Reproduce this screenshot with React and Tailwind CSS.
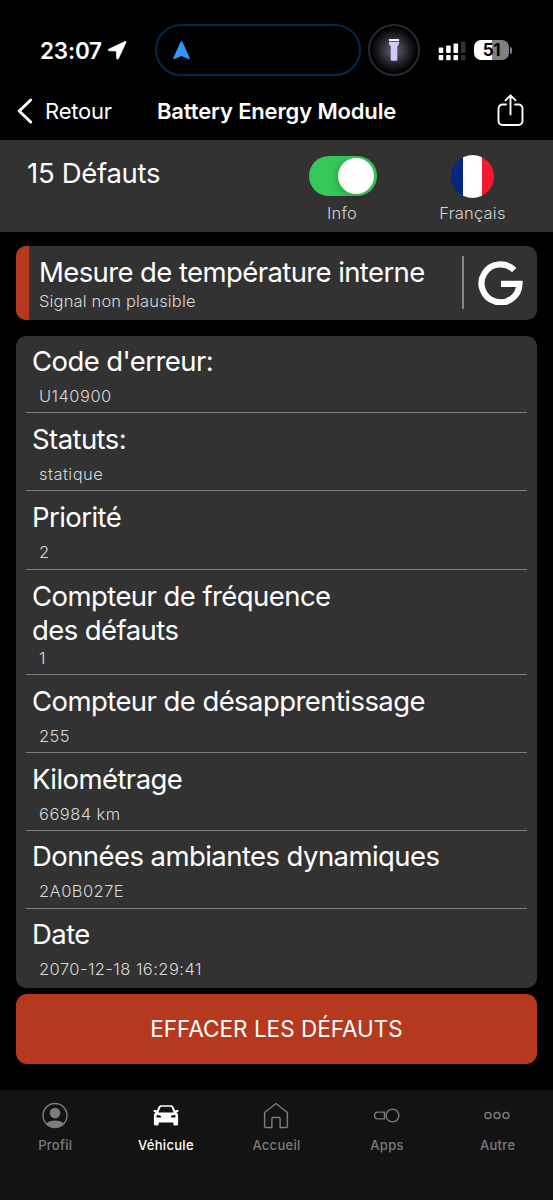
const rows = [
    { title: "Code d'erreur:", value: "U140900", height: "h-[77px] pt-[8px]" },
    { title: "Statuts:", value: "statique", height: "h-[78px] pt-[9px]" },
    { title: "Priorité", value: "2", height: "h-[79px] pt-[9px]" },
    { title: "Compteur de fréquence des défauts", value: "1", height: "h-[105px] pt-[9px]", wrap: true },
    { title: "Compteur de désapprentissage", value: "255", height: "h-[78px] pt-[9px]" },
    { title: "Kilométrage", value: "66984 km", height: "h-[78px] pt-[9px]" },
    { title: "Données ambiantes dynamiques", value: "2A0B027E", height: "h-[78px] pt-[8px]" },
    { title: "Date", value: "2070-12-18 16:29:41", height: "h-[79px] pt-[8px]" },
];

function StatusBar() {
    return (
        <div className="flex h-[52px] items-center">
            <span className="mt-[2px] ml-10 w-[64px] text-[22.5px] font-semibold tracking-[-0.2px]">23:07</span>
            <svg className="ml-[3px]" width="20" height="20" viewBox="0 0 20 20" fill="#fff" stroke="#fff" strokeWidth="0.8" strokeLinejoin="round">
                <path d="M18 1.600 1.800 9.200c-.9.500-.6 1.500.4 1.600l7.300.2.200 7.300c.1 1 1.200 1.200 1.700.3L18.900 2.600c.3-.8-.3-1.300-.9-1Z" />
            </svg>

            {/* Dynamic island */}
            <div className="ml-[28px] flex h-[52px] w-[206px] items-center rounded-full border-2 border-[#062747] pl-[16px]">
                <svg width="17" height="19" viewBox="0 0 17 19" fill="#3296ff">
                    <path d="M7.600.8c.3-.8 1.500-.8 1.800 0L16.600 16.800c.5 1.100-.3 1.700-1.200 1.200L8.500 15 1.600 18C.7 18.500-.1 17.900.4 16.800Z" />
                </svg>
            </div>
            <div className="ml-[7px] flex size-[52px] items-center justify-center rounded-full border-2 border-[#2a2733] bg-[radial-gradient(circle,#5f5b70_0%,#46424f_22%,#1c1b22_46%,#000_68%)]">
                <svg width="12" height="24" viewBox="0 0 12 24">
                    <path d="M1.500 1h9q.6 0 .6.6V3H.9V1.600Q.9 1 1.500 1Z" fill="#f1edff" />
                    <path d="M.9 3.800h10.200v1.200q0 2-1.800 3.400V21.500q0 1.200-1.200 1.200H3.900q-1.200 0-1.200-1.200V8.400Q.9 7 .9 5Z" fill="#cfcaf8" />
                </svg>
            </div>

            {/* Signal */}
            <svg className="mt-px ml-[18px]" width="29" height="20" viewBox="0 0 29 20" fill="#fff">
                <rect x="0.700" y="6.500" width="4.600" height="5.500" rx="1" />
                <rect x="8.100" y="4.500" width="4.600" height="7.500" rx="1" />
                <rect x="15.500" y="2.500" width="4.600" height="9.500" rx="1" />
                <rect x="22.900" y="0.500" width="4.600" height="11.500" rx="1" fill="#303030" />
                <rect x="0.700" y="14" width="4.600" height="5.200" rx="1" />
                <rect x="8.100" y="14" width="4.600" height="5.200" rx="1" />
                <rect x="15.500" y="14" width="4.600" height="5.200" rx="1" />
                <rect x="22.900" y="14" width="4.600" height="5.200" rx="1" fill="#303030" />
            </svg>

            {/* Battery */}
            <div className="ml-[7px] flex h-5 w-[35px] items-center justify-center rounded-[7px] bg-linear-to-r from-white from-51% to-[#808080] to-51% text-[17px] leading-none font-bold tracking-[-0.3px] text-black">
                51
            </div>
            <div className="ml-px h-[7px] w-[2px] rounded-r-full bg-[#808080]" />
        </div>
    );
}

function NavBar() {
    return (
        <div className="mt-[5px] flex h-[59px] items-center">
            <svg className="ml-4" width="18" height="28" viewBox="0 0 18 28" fill="none" stroke="#fff" strokeWidth="3" strokeLinecap="round" strokeLinejoin="round">
                <path d="M14.700 3 3.200 14l11.500 11" />
            </svg>
            <span className="mt-[2px] ml-[11px] w-[112px] text-[22px] tracking-[-0.2px]">Retour</span>
            <h1 className="mt-[2px] w-[240px] text-[22px] font-semibold tracking-[-0.15px] whitespace-nowrap">Battery Energy Module</h1>
            <svg className="mb-[2px] ml-[100px]" width="28" height="34" viewBox="0 0 28 34" fill="none" stroke="#fff" strokeWidth="1.900" strokeLinecap="round" strokeLinejoin="round">
                <path d="M9 11.500H5.500a4 4 0 0 0-4 4V28a4 4 0 0 0 4 4h16a4 4 0 0 0 4-4V15.500a4 4 0 0 0-4-4H18M13.500 21.500V2.500M8.500 7.300l5-5 5 5" />
            </svg>
        </div>
    );
}

function FilterBar() {
    return (
        <div className="flex h-[92px] bg-[#323232]">
            <h2 className="mt-[16px] ml-[27px] w-[250px] text-[27.5px] leading-[34px] tracking-[-0.3px]">15 Défauts</h2>
            <div className="flex w-[131px] flex-col items-center pt-4">
                <div className="flex h-10 w-[68px] items-center justify-end rounded-full bg-[#35c759] pr-[3px]">
                    <div className="size-[36px] rounded-full bg-white shadow-[-2px_1px_6px_rgba(0,0,0,0.2)]" />
                </div>
                <span className="mt-[7px] mr-px text-[16.5px] leading-5 font-light tracking-[0.2px] text-[#d2d2d2]">Info</span>
            </div>
            <div className="flex w-[129px] flex-col items-center pt-[15px]">
                <div className="flex size-[43px] overflow-hidden rounded-full">
                    <div className="w-3 bg-[#052781]" />
                    <div className="w-[19px] bg-white" />
                    <div className="w-3 bg-[#f5192f]" />
                </div>
                <span className="mt-[5px] text-[16.5px] leading-5 font-light tracking-[0.2px] text-[#d2d2d2]">Français</span>
            </div>
        </div>
    );
}

function FaultCard() {
    return (
        <div className="mx-4 mt-[14px] flex h-[74px] overflow-hidden rounded-[10px] bg-[#323232]">
            <div className="w-[13px] bg-[#b5391e]" />
            <div className="ml-[10px] w-[423px] pt-[9px]">
                <div className="text-[27.5px] leading-[34px] tracking-[-0.6px] whitespace-nowrap">Mesure de température interne</div>
                <div className="mt-[2px] text-[16.5px] leading-5 font-light tracking-[0.15px] text-[#d8d8d8]">Signal non plausible</div>
            </div>
            <div className="mt-[10px] h-[53px] w-[1.5px] bg-[#858585]" />
            <svg className="mt-[15px] ml-[14.5px]" width="45" height="44" viewBox="0 0 45 44" fill="none" stroke="#fff" strokeWidth="6.200">
                <path d="M36.200 9.200A19 19 0 1 0 41.500 22.900H23" />
            </svg>
        </div>
    );
}

function DetailRow({ row, last }) {
    return (
        <div className={`${row.height} ${last ? "" : "border-b border-[#7c7c7c]"}`}>
            <div className={`ml-[6px] text-[27.5px] leading-[34px] tracking-[-0.57px] ${row.wrap ? "h-[69px] w-[330px]" : "h-[42px] whitespace-nowrap"}`}>
                {row.title}
            </div>
            <div className="ml-[13px] text-[16.5px] leading-5 font-light tracking-[0.45px] text-[#d8d8d8]">{row.value}</div>
        </div>
    );
}

function TabIcon({ name }) {
    if (name === "Profil") {
        return (
            <svg width="28" height="28" viewBox="0 0 28 28" fill="#7c7c7c">
                <circle cx="14" cy="14.500" r="12" fill="none" stroke="#7c7c7c" strokeWidth="1.400" />
                <circle cx="14" cy="12.100" r="5.300" />
                <path d="M5 22.500c2-2 5.300-3 9-3s7 1 9 3c-2 2.700-5.500 4.200-9 4.200S7 25.200 5 22.500Z" />
            </svg>
        );
    }
    if (name === "Véhicule") {
        return (
            <svg width="28" height="28" viewBox="0 0 28 28">
                <path fill="#fff" fillRule="evenodd" d="M6.600 5.800q.6-1.500 2-1.500h10.800q1.400 0 2 1.500l1.900 4q.4-.9 1.100-.9h1q1.200 0 1.200 1.100t-1.200 1.100h-.9l.9 1.200q.7 1 .7 2.200v8.500q0 1.400-1.300 1.400h-2.300q-1.200 0-1.200-1.300v-1.700H6.700v1.700q0 1.300-1.200 1.300H3.200q-1.300 0-1.300-1.400v-8.500q0-1.200.7-2.200l.9-1.200h-.9q-1.200 0-1.200-1.100t1.200-1.100h1q.7 0 1.100.9Zm1.800.6-1.900 4.500q0 .5.500.5h14q.5 0 .5-.5l-1.900-4.500q-.2-.7-.9-.7H9.300q-.7 0-.9.700ZM5.400 13.900q-.9 0-.9 1v.8q0 .9.900.9h2.800q.9 0 .9-.9t-.9-1.100Q7 13.900 5.400 13.900Zm17.200 0q-1.600 0-2.800.7-.9.200-.9 1.100t.9.900h2.800q.9 0 .9-.9v-.8q0-1-.9-1Z" />
            </svg>
        );
    }
    if (name === "Accueil") {
        return (
            <svg width="28" height="28" viewBox="0 0 28 28" fill="none" stroke="#7c7c7c" strokeWidth="1.400" strokeLinejoin="round">
                <path d="M2.600 11.500 14 2.500l11.400 9v13.800q0 1.200-1.200 1.200h-6.100V17.500q0-1-1-1h-6.200q-1 0-1 1v9H3.800q-1.200 0-1.200-1.200Z" />
            </svg>
        );
    }
    if (name === "Apps") {
        return (
            <svg width="28" height="28" viewBox="0 0 28 28" fill="none" stroke="#7c7c7c" strokeWidth="1.400">
                <circle cx="19.500" cy="14.500" r="6.400" />
                <path d="M11.500 11.100H5a3.400 3.400 0 0 0 0 6.800h6.500Z" />
            </svg>
        );
    }
    return (
        <svg width="28" height="28" viewBox="0 0 28 28" fill="none" stroke="#7c7c7c" strokeWidth="1.400">
            <circle cx="4" cy="14.500" r="3" />
            <circle cx="13" cy="14.500" r="3" />
            <circle cx="22" cy="14.500" r="3" />
        </svg>
    );
}

function TabBar() {
    const tabs = ["Profil", "Véhicule", "Accueil", "Apps", "Autre"];

    return (
        <nav className="mt-auto grid h-[110px] grid-cols-5 bg-[#131313]">
            {tabs.map((tab) => (
                <div key={tab} className="flex flex-col items-center pt-[11px]">
                    <TabIcon name={tab} />
                    <span className={`mt-[8px] text-[13px] leading-4 font-medium tracking-[0.3px] ${tab === "Véhicule" ? "text-white" : "text-[#7c7c7c]"}`}>
                        {tab}
                    </span>
                </div>
            ))}
        </nav>
    );
}

function App() {
    return (
        <div className="flex h-[1200px] w-[553px] flex-col overflow-hidden bg-black pt-6 font-['Inter',sans-serif] text-white">
            <StatusBar />
            <NavBar />
            <FilterBar />
            <FaultCard />

            {/* Fault details */}
            <div className="mx-4 mt-4 h-[652px] rounded-[10px] bg-[#323232] px-[10px]">
                {rows.map((row, index) => (
                    <DetailRow key={row.title} row={row} last={index === rows.length - 1} />
                ))}
            </div>

            <button className="mx-4 mt-[6px] h-[70px] rounded-[11px] bg-[#b5391e] text-[22.5px]">
                EFFACER LES DÉFAUTS
            </button>
            <TabBar />
        </div>
    );
}

export default App;
